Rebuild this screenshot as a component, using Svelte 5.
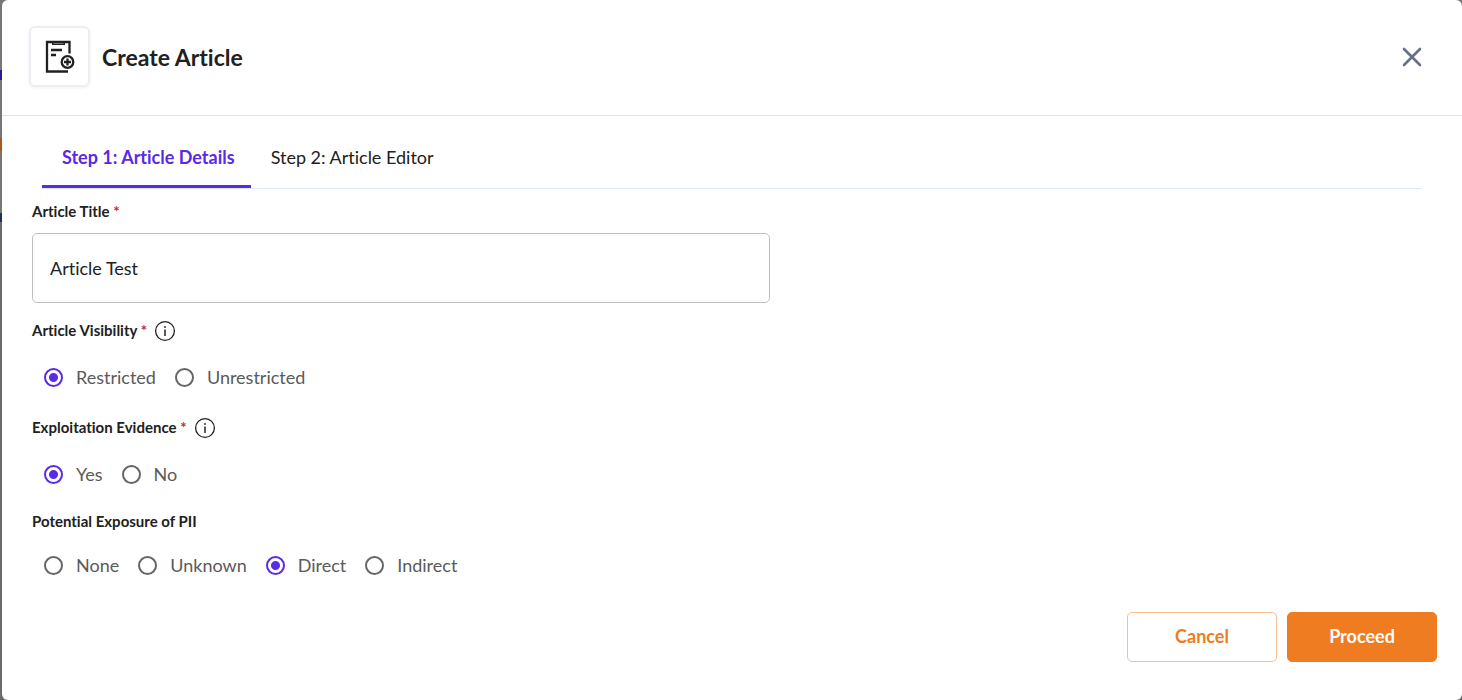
<script lang="ts">
  type RadioGroup = { name: string; label: string; required: boolean; info: boolean; options: string[] };

  const steps = ['Step 1: Article Details', 'Step 2: Article Editor'];
  const groups: RadioGroup[] = [
    { name: 'visibility', label: 'Article Visibility', required: true, info: true, options: ['Restricted', 'Unrestricted'] },
    { name: 'evidence', label: 'Exploitation Evidence', required: true, info: true, options: ['Yes', 'No'] },
    { name: 'pii', label: 'Potential Exposure of PII', required: false, info: false, options: ['None', 'Unknown', 'Direct', 'Indirect'] }
  ];

  let activeStep = $state(0);
  let title = $state('Article Test');
  let selected: Record<string, string> = $state({ visibility: 'Restricted', evidence: 'Yes', pii: 'Direct' });
</script>

<div class="backdrop">
  <div class="modal" role="dialog" aria-labelledby="modal-title">
    <header class="header">
      <div class="header-icon">
        <svg width="32" height="34" viewBox="0 0 32 34" fill="none" stroke="#212121" stroke-width="2.3">
          <path d="M25.5 13.5V2H3v29.5h21" />
          <path d="M8 3.5h13" stroke-width="3" />
          <path d="M9.5 3.5h10" stroke="#777" stroke-width="1" />
          <path d="M7 10h11M7 15h5" />
          <circle cx="23.5" cy="22" r="5.8" />
          <path d="M20 22h7M23.5 18.5v7" />
        </svg>
      </div>
      <h1 id="modal-title">Create Article</h1>
      <button class="close" type="button" aria-label="Close">
        <svg width="20" height="20" viewBox="0 0 20 20" fill="none" stroke="#64708a" stroke-width="2.6" stroke-linecap="round">
          <path d="M2 2l16 16M18 2L2 18" />
        </svg>
      </button>
    </header>

    <div class="tabs" role="tablist">
      {#each steps as step, i}
        <button class="tab" class:active={activeStep === i} type="button" role="tab" aria-selected={activeStep === i} onclick={() => (activeStep = i)}>{step}</button>
      {/each}
    </div>

    <form class="form">
      <div class="field">
        <label class="label" for="article-title">Article Title <span class="required">*</span></label>
        <input id="article-title" class="text-input" type="text" bind:value={title} />
      </div>

      {#each groups as group}
        <div class="group" class:compact={!group.info} role="radiogroup" aria-labelledby="{group.name}-label">
          <div class="group-head">
            <span class="label" id="{group.name}-label">{group.label}{#if group.required}&nbsp;<span class="required">*</span>{/if}</span>
            {#if group.info}
              <svg class="info" width="22" height="22" viewBox="0 0 22 22" fill="none" stroke="#212121">
                <circle cx="11" cy="11" r="9.4" stroke-width="1.3" />
                <path d="M11 9.5v6.5" stroke-width="1.5" />
                <circle cx="11" cy="7" r="0.9" fill="#212121" stroke="none" />
              </svg>
            {/if}
          </div>
          <div class="options">
            {#each group.options as option}
              <label class="option">
                <input type="radio" name={group.name} value={option} bind:group={selected[group.name]} />
                <span>{option}</span>
              </label>
            {/each}
          </div>
        </div>
      {/each}
    </form>

    <footer class="footer">
      <button class="btn outline" type="button">Cancel</button>
      <button class="btn solid" type="button">Proceed</button>
    </footer>
  </div>
</div>

<style>
  :global(body) {
    background: #6e6e6e;
    font-family: Lato, sans-serif;
    font-variant-ligatures: none;
    color: #212121;
  }
  .backdrop {
    display: flex;
    min-height: 100vh;
    padding-left: 2px;
    box-sizing: border-box;
    background: linear-gradient(#777 0, #777 70px, #2a1a8a 70px, #2a1a8a 80px, #777 80px, #777 138px, #a85a1c 138px, #a85a1c 151px, #777 151px, #777 213px, #1f3350 213px, #1f3350 222px, #6b6b6b 222px);
  }
  .modal {
    display: flex;
    flex-direction: column;
    flex: 1;
    background: #fff;
    border-radius: 6px;
  }
  .header {
    display: flex;
    align-items: center;
    gap: 12px;
    padding: 26px 36px 28px 27px;
    border-bottom: 1px solid #e2e2e4;
  }
  .header-icon {
    display: flex;
    align-items: center;
    justify-content: center;
    width: 61px;
    height: 61px;
    box-sizing: border-box;
    border: 2px solid #ededf4;
    border-radius: 6px;
    box-shadow: 0 1px 3px rgba(60, 60, 120, 0.08);
  }
  h1 {
    margin: 0;
    font-size: 23px;
    font-weight: 700;
    line-height: 30px;
  }
  button {
    font-family: inherit;
    font-variant-ligatures: inherit;
    cursor: pointer;
  }
  .close {
    display: flex;
    margin-left: auto;
    padding: 4px;
    border: 0;
    background: none;
  }
  .tabs {
    display: flex;
    height: 72px;
    margin: 0 40px;
    border-bottom: 1px solid #dce9f3;
  }
  .tab {
    padding: 12px 16px 0 20px;
    border: 0;
    border-bottom: 3px solid transparent;
    background: none;
    color: #212121;
    font-size: 18px;
  }
  .tab.active {
    border-bottom-color: #5a2be2;
    color: #5a2be2;
    font-weight: 700;
  }
  .form {
    padding: 11px 30px 0;
  }
  .field {
    display: flex;
    flex-direction: column;
    gap: 11px;
    max-width: 738px;
  }
  .label {
    font-size: 15px;
    font-weight: 700;
    line-height: 22px;
  }
  .required {
    color: #c62828;
  }
  .text-input {
    height: 70px;
    padding: 0 17px;
    box-sizing: border-box;
    border: 1px solid #c0c0c0;
    border-radius: 5px;
    color: #212121;
    font-family: inherit;
    font-size: 18px;
    font-variant-ligatures: inherit;
  }
  .group {
    padding-top: 17px;
  }
  .group-head {
    display: flex;
    align-items: flex-end;
    gap: 7px;
    height: 22px;
  }
  .group-head .label {
    padding-bottom: 1px;
  }
  .options {
    display: flex;
    align-items: center;
    gap: 19px;
    height: 42px;
    padding: 14px 0 2px 12px;
  }
  .compact {
    padding-top: 14px;
  }
  .compact .options {
    padding-top: 11px;
  }
  .option {
    display: flex;
    align-items: center;
    gap: 13px;
    color: #5a5a5a;
    font-size: 18px;
    line-height: 24px;
  }
  .option input {
    appearance: none;
    width: 19px;
    height: 19px;
    margin: 0;
    border: 2px solid #666;
    border-radius: 50%;
  }
  .option input:checked {
    border-color: #5a2be2;
    background: radial-gradient(circle, #5a2be2 4px, #fff 5px);
  }
  .footer {
    display: flex;
    justify-content: flex-end;
    gap: 10px;
    margin-top: auto;
    padding: 20px 25px 38px;
  }
  .btn {
    width: 150px;
    height: 50px;
    padding: 0 0 2px;
    border: 1px solid #f8bd90;
    border-radius: 5px;
    font-size: 18px;
    font-weight: 700;
  }
  .outline {
    background: #fff;
    color: #f07c22;
  }
  .solid {
    border-color: #f07c22;
    background: #f07c22;
    color: #fff;
  }
</style>
